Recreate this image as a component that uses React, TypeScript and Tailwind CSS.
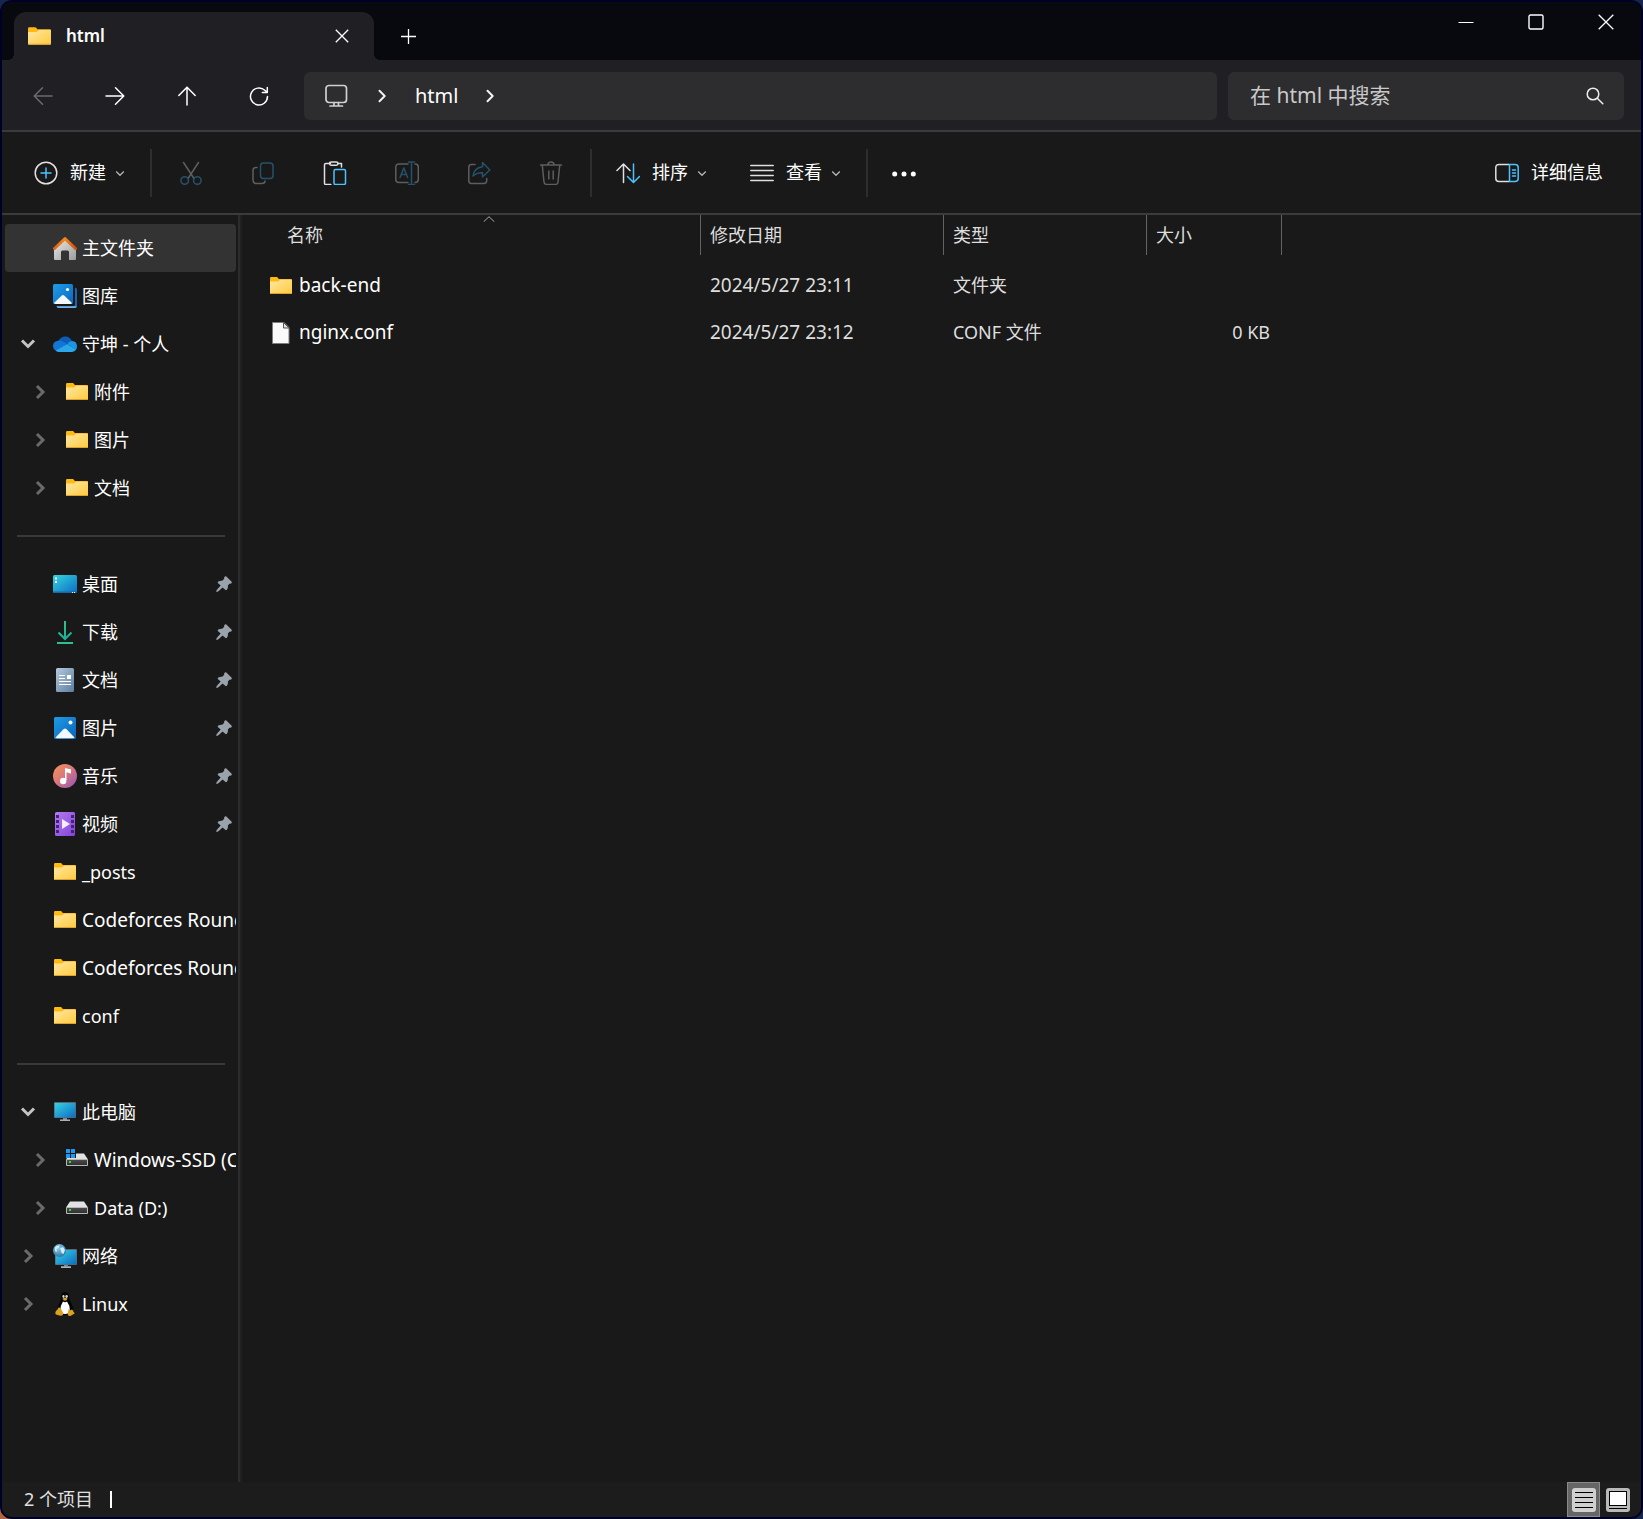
import React from "react";

type IconProps = { className?: string };

/* ---------- shell icons ---------- */

function FolderIcon({ className = "size-6" }: IconProps) {
  return (
    <svg viewBox="0 0 24 24" className={className} aria-hidden="true">
      <defs>
        <linearGradient id="folder-front" x1="0" y1="0" x2="1" y2="1">
          <stop offset="0" stopColor="#ffe8a3" />
          <stop offset="1" stopColor="#ffc93c" />
        </linearGradient>
      </defs>
      <path d="M1 4.2Q1 3 2.2 3h5.4q.8 0 1.3.7L9.8 5H22q1 0 1 1v13H1z" fill="#ffb913" />
      <path d="M1 7.6h7.4q.8 0 1.3-.5l.9-.9q.4-.4 1-.4H23V19q0 1-1 1H2q-1 0-1-1z" fill="url(#folder-front)" />
      <path d="M1 19h22q0 1-1 1H2q-1 0-1-1z" fill="#dfa02c" />
    </svg>
  );
}

function HomeIcon() {
  return (
    <svg viewBox="0 0 24 24" className="size-6" aria-hidden="true">
      <defs>
        <linearGradient id="home-wall" x1="0" y1="0" x2="1" y2="1">
          <stop offset="0" stopColor="#e8e8e8" />
          <stop offset="1" stopColor="#9b9b9b" />
        </linearGradient>
        <linearGradient id="home-roof" x1="0" y1="0" x2="1" y2="0">
          <stop offset="0" stopColor="#e0621a" />
          <stop offset=".5" stopColor="#f08a1c" />
          <stop offset="1" stopColor="#d4500f" />
        </linearGradient>
      </defs>
      <path d="M12 4 1 14v9q0 1 1 1h6v-8q0-1.500 1.500-1.500h5q1.500 0 1.500 1.500v8h6q1 0 1-1v-9z" fill="url(#home-wall)" />
      <path d="M1.500 12.500 12 2.600l10.500 9.900" fill="none" stroke="url(#home-roof)" strokeWidth="3" strokeLinejoin="round" strokeLinecap="round" />
    </svg>
  );
}

function GalleryIcon() {
  return (
    <svg viewBox="0 0 24 24" className="size-6" aria-hidden="true">
      <defs>
        <linearGradient id="gallery-sky" x1="0" y1="0" x2="1" y2="1">
          <stop offset="0" stopColor="#1f9de8" />
          <stop offset="1" stopColor="#0a67bd" />
        </linearGradient>
      </defs>
      <path d="M22 3.500q2 .3 2 2V22q0 2-2 2H5.500q-1.700 0-2-1.800H20q2 0 2-2z" fill="#1667b0" />
      <path d="M3.500 22.200H22q1 0 1.700-.5Q23.500 24 22 24H5.500q-1.700 0-2-1.800z" fill="#6fb2e8" />
      <rect width="20" height="20" rx="1.500" fill="url(#gallery-sky)" />
      <path d="m1 19 7.800-7.500q1.200-1 2.400 0L19 19q-.5 1-1.500 1h-15Q1.500 20 1 19z" fill="#f2f8fd" />
      <circle cx="14.500" cy="5.500" r="1.600" fill="#fff" />
    </svg>
  );
}

function OneDriveIcon() {
  return (
    <svg viewBox="0 0 24 24" className="size-6" aria-hidden="true">
      <path d="M5.500 9Q7.500 4.500 12.500 4.500q4.500 0 6.300 4.600L13 14z" fill="#0d5cb5" />
      <path d="M4.800 8.800q3.200-.8 6 1.200l5 3L2.500 18.500Q0 16.800 0 14q0-4.300 4.800-5.200z" fill="#1475d4" />
      <path d="M14.500 12.200q1.700-3.200 4.500-3.200 5 .6 5 5.300 0 2-1 3.500z" fill="#1b95e6" />
      <path d="M2.500 18.500 14.300 12.300l8.900 5.300q-1.500 2.400-4.200 2.400H6q-2 0-3.500-1.500z" fill="#29a8ec" />
    </svg>
  );
}

function DesktopIcon() {
  return (
    <svg viewBox="0 0 24 24" className="size-6" aria-hidden="true">
      <defs>
        <linearGradient id="desktop-face" x1="0" y1="0" x2="1" y2="1">
          <stop offset="0" stopColor="#35d5e0" />
          <stop offset="1" stopColor="#0c6cc4" />
        </linearGradient>
      </defs>
      <rect y="3" width="24" height="18" rx="1.500" fill="url(#desktop-face)" />
      <path d="M0 19.500h24q0 1.500-1.500 1.500h-21Q0 21 0 19.500z" fill="#1668a8" />
      <path d="M2 5.500h2v2H2zM2 9h2v2H2zM19 20h1v1h-1zM21 20h1v1h-1z" fill="#fff" />
    </svg>
  );
}

function DownloadIcon() {
  return (
    <svg viewBox="0 0 24 24" className="size-6" aria-hidden="true">
      <defs>
        <linearGradient id="download-ink" gradientUnits="userSpaceOnUse" x1="4" y1="1" x2="20" y2="24">
          <stop offset="0" stopColor="#35c97f" />
          <stop offset="1" stopColor="#12a5a0" />
        </linearGradient>
      </defs>
      <g fill="none" stroke="url(#download-ink)" strokeWidth="2">
        <path d="M12 1v17.500M5.500 12.500l6.500 6.500 6.500-6.500" />
      </g>
      <rect x="4" y="22" width="16" height="2" fill="#2cc08c" />
    </svg>
  );
}

function DocumentIcon() {
  return (
    <svg viewBox="0 0 24 24" className="size-6" aria-hidden="true">
      <defs>
        <linearGradient id="doc-face" x1="0" y1="0" x2="1" y2="1">
          <stop offset="0" stopColor="#b5c9dc" />
          <stop offset="1" stopColor="#5c7da0" />
        </linearGradient>
      </defs>
      <rect x="3" width="18" height="24" rx="1.500" fill="url(#doc-face)" />
      <path d="M6 7h6v1H6zM6 10h6v1H6zM6 13h12v1H6zM6 16h12v1H6zM14 7h4v4h-4z" fill="#fff" />
    </svg>
  );
}

function PictureIcon() {
  return (
    <svg viewBox="0 0 24 24" className="size-6" aria-hidden="true">
      <defs>
        <linearGradient id="picture-sky" x1="0" y1="0" x2="1" y2="1">
          <stop offset="0" stopColor="#1e9ce6" />
          <stop offset="1" stopColor="#0a62b8" />
        </linearGradient>
      </defs>
      <rect x="1" y="1" width="22" height="22" rx="1.500" fill="url(#picture-sky)" />
      <path d="m2.500 21.500 8-8.300q1.500-1.300 3 0l8 8.300q-.5.700-1.500.7H4q-1 0-1.500-.7z" fill="#f2f8fd" />
      <circle cx="17.500" cy="6.500" r="2" fill="#fff" />
    </svg>
  );
}

function MusicIcon() {
  return (
    <svg viewBox="0 0 24 24" className="size-6" aria-hidden="true">
      <defs>
        <linearGradient id="music-disc" x1=".1" y1=".1" x2=".9" y2=".9">
          <stop offset="0" stopColor="#f08f5b" />
          <stop offset=".5" stopColor="#d77580" />
          <stop offset="1" stopColor="#9b5bb0" />
        </linearGradient>
      </defs>
      <circle cx="12" cy="12" r="12" fill="url(#music-disc)" />
      <path d="M12 4q3 .8 6 1.300v4.200q-2-.3-4.500-1.200V16H12z" fill="#fff" />
      <circle cx="10.200" cy="17" r="3.200" fill="#fff" />
    </svg>
  );
}

function VideoIcon() {
  return (
    <svg viewBox="0 0 24 24" className="size-6" aria-hidden="true">
      <defs>
        <linearGradient id="video-face" x1="0" y1="0" x2="1" y2="1">
          <stop offset="0" stopColor="#b47bf0" />
          <stop offset="1" stopColor="#8344d6" />
        </linearGradient>
      </defs>
      <rect x="2" width="20" height="24" rx="1.500" fill="url(#video-face)" />
      <path d="M3 3h3v3H3zM3 8h3v3H3zM3 13h3v3H3zM3 18h3v3H3zM18 3h3v3h-3zM18 8h3v3h-3zM18 13h3v3h-3zM18 18h3v3h-3z" fill="#43217c" />
      <path d="M9 7v10l8-5z" fill="#f4eefb" />
    </svg>
  );
}

function ComputerIcon() {
  return (
    <svg viewBox="0 0 24 24" className="size-6" aria-hidden="true">
      <defs>
        <linearGradient id="pc-face" x1="0" y1="0" x2="1" y2="1">
          <stop offset="0" stopColor="#37d3e2" />
          <stop offset="1" stopColor="#0c6cc4" />
        </linearGradient>
      </defs>
      <rect x="1" y="2" width="22" height="16" rx="1" fill="#5c6670" />
      <rect x="1.700" y="3" width="20.600" height="14.400" fill="url(#pc-face)" />
      <path d="M10 18h4v2h-4z" fill="#7d868e" />
      <path d="M7 19.500h10V21H7z" fill="#a9b1b8" />
    </svg>
  );
}

function DriveIcon({ windows = false }: { windows?: boolean }) {
  return (
    <svg viewBox="0 0 24 24" className="size-6" aria-hidden="true">
      <defs>
        <linearGradient id="drive-front" x1="0" y1="0" x2="0" y2="1">
          <stop offset="0" stopColor="#4b4b4b" />
          <stop offset="1" stopColor="#303030" />
        </linearGradient>
      </defs>
      <path d="M5 5.500h14l4 6H1z" fill="#e2e2e2" />
      <rect x="1" y="11" width="22" height="7" rx="1" fill="#b6b6b6" />
      <rect x="2" y="12" width="20" height="5" fill="url(#drive-front)" />
      <rect x="4" y="13" width="2" height="2" fill="#2ee02e" />
      {windows && (
        <>
          <path d="M1 0h10v10H1z" fill="#14181c" />
          <path d="M1 1h4v4H1zM6 1h4v4H6zM1 6h4v4H1zM6 6h4v4H6z" fill="#1a9af0" />
        </>
      )}
    </svg>
  );
}

function NetworkIcon() {
  return (
    <svg viewBox="0 0 24 24" className="size-6" aria-hidden="true">
      <defs>
        <linearGradient id="net-face" x1="0" y1="0" x2="1" y2="1">
          <stop offset="0" stopColor="#37d3e2" />
          <stop offset="1" stopColor="#0c6cc4" />
        </linearGradient>
        <radialGradient id="net-globe" cx=".4" cy=".3" r=".8">
          <stop offset="0" stopColor="#8fd0ee" />
          <stop offset="1" stopColor="#1f6c9c" />
        </radialGradient>
      </defs>
      <rect x="2" y="5" width="22" height="16" rx="1" fill="#5c6670" />
      <rect x="2.700" y="6" width="20.600" height="14.400" fill="url(#net-face)" />
      <path d="M11 21h4v1.500h-4z" fill="#7d868e" />
      <path d="M8 22.300h10V24H8z" fill="#a9b1b8" />
      <circle cx="6.500" cy="6.500" r="6.500" fill="url(#net-globe)" />
      <path d="M2 3.500Q4 1 6.500 1.500L5.500 4 3.500 5 4 8 2 7zM7 4.500l3-1.500 2 3-1.500 4-2-1-.5-2.500z" fill="#d3ecf7" />
    </svg>
  );
}

function LinuxIcon() {
  return (
    <svg viewBox="0 0 24 24" className="size-6" aria-hidden="true">
      <path d="M12 0q4 0 4 5 0 3 2.300 6 2.700 4.500 1.700 9l-6 3h-5l-5-4q0-4.500 2.500-8Q8 8 8 5q0-5 4-5z" fill="#050505" />
      <path d="M10 9.500q2 1.500 4 0 2.800 4 2.800 8 0 4.500-4.800 4.500t-4.600-4.500q0-4 2.600-8z" fill="#fff" />
      <ellipse cx="10.500" cy="4.500" rx="1.100" ry="1.400" fill="#d8d8d8" />
      <ellipse cx="13.600" cy="4.500" rx="1.200" ry="1.400" fill="#d8d8d8" />
      <path d="M9.500 6.800q2.500-2 5 0-1 2-2.500 2t-2.500-2z" fill="#dba21c" />
      <path d="M5.500 15.500q1.500-.5 2.500 1.500l2.200 4q.3 3-2.700 2.800L3 22.500q-1-.5-.5-2.200.2-1.800 1.500-2zM15.500 17q1 2 3.500.5 1.500 1 1.500 2.500 1.500.8.800 1.700-2 1-3.500 2-2.800.8-3.100-1.700z" fill="#dba21c" />
    </svg>
  );
}

function FileIcon() {
  return (
    <svg viewBox="0 0 24 24" className="size-6" aria-hidden="true">
      <path d="M3.500 1.500H15l5 5v16H3.500z" fill="#fafafa" stroke="#7c7c7c" />
      <path d="M14.500 1.500V7H20z" fill="#e2e2e2" stroke="#555" />
    </svg>
  );
}

function PinIcon() {
  return (
    <svg viewBox="0 0 16 16" className="size-4 shrink-0" aria-hidden="true">
      <path
        d="M8.800.6q.8-.8 1.600 0l5 4.800q.9 1 0 1.800-.9.500-2 .6l-1.500 1.700q.3 2.500-1 4.300-.9.900-1.700 0l-2.600-2.400-4.500 4.200-1.800.3.200-1.700L4.700 9.600 2.100 7.300q-.8-.9.100-1.700 1.900-1.200 4-.9L8 3q0-1.500.8-2.400z"
        fill="#9aa3aa"
      />
    </svg>
  );
}

function Chevron({ dir }: { dir: "down" | "right" }) {
  return dir === "down" ? (
    <svg viewBox="0 0 16 16" className="size-4" fill="none" stroke="#c4c4c4" strokeWidth="3" aria-hidden="true">
      <path d="m2 4.500 6 6 6-6" />
    </svg>
  ) : (
    <svg viewBox="0 0 16 16" className="size-4" fill="none" stroke="#6a6a6a" strokeWidth="3" aria-hidden="true">
      <path d="m5 2 6 6-6 6" />
    </svg>
  );
}

function SmallChevron({ className = "" }: IconProps) {
  return (
    <svg viewBox="0 0 10 10" className={"size-[10px] " + className} fill="none" stroke="#b4b4b4" strokeWidth="1.300" aria-hidden="true">
      <path d="m1.200 3.500 3.800 3.800 3.800-3.800" />
    </svg>
  );
}

/* ---------- line icons ---------- */

function Line({ children, className = "size-6" }: { children: React.ReactNode; className?: string }) {
  return (
    <svg
      viewBox="0 0 24 24"
      className={className}
      fill="none"
      stroke="currentColor"
      strokeWidth="1.500"
      strokeLinecap="round"
      strokeLinejoin="round"
      aria-hidden="true"
    >
      {children}
    </svg>
  );
}

/* ---------- sidebar ---------- */

type NavItem = {
  label: string;
  icon: React.ReactNode;
  level?: 0 | 1;
  open?: boolean;
  closed?: boolean;
  pinned?: boolean;
  selected?: boolean;
  long?: boolean;
};

const groups: NavItem[][] = [
  [
    { label: "主文件夹", icon: <HomeIcon />, selected: true },
    { label: "图库", icon: <GalleryIcon /> },
    { label: "守坤 - 个人", icon: <OneDriveIcon />, open: true },
    { label: "附件", icon: <FolderIcon />, level: 1, closed: true },
    { label: "图片", icon: <FolderIcon />, level: 1, closed: true },
    { label: "文档", icon: <FolderIcon />, level: 1, closed: true },
  ],
  [
    { label: "桌面", icon: <DesktopIcon />, pinned: true },
    { label: "下载", icon: <DownloadIcon />, pinned: true },
    { label: "文档", icon: <DocumentIcon />, pinned: true },
    { label: "图片", icon: <PictureIcon />, pinned: true },
    { label: "音乐", icon: <MusicIcon />, pinned: true },
    { label: "视频", icon: <VideoIcon />, pinned: true },
    { label: "_posts", icon: <FolderIcon /> },
    { label: "Codeforces Round", icon: <FolderIcon />, long: true },
    { label: "Codeforces Round", icon: <FolderIcon />, long: true },
    { label: "conf", icon: <FolderIcon /> },
  ],
  [
    { label: "此电脑", icon: <ComputerIcon />, open: true },
    { label: "Windows-SSD (C:)", icon: <DriveIcon windows />, level: 1, closed: true, long: true },
    { label: "Data (D:)", icon: <DriveIcon />, level: 1, closed: true },
    { label: "网络", icon: <NetworkIcon />, closed: true },
    { label: "Linux", icon: <LinuxIcon />, closed: true },
  ],
];

function SidebarRow({ item }: { item: NavItem }) {
  return (
    <li>
      <button
        type="button"
        className={
          "flex h-12 w-full items-center overflow-hidden rounded-sm pr-1 text-left text-white " +
          (item.level === 1 ? "pl-[23px] " : "pl-[11px] ") +
          (item.selected ? "bg-[#333333]" : "")
        }
      >
        <span className="mr-[13px] flex w-6 shrink-0 justify-center">
          {item.open && <Chevron dir="down" />}
          {item.closed && <Chevron dir="right" />}
        </span>
        <span className="mr-[5px] shrink-0">{item.icon}</span>
        <span className={"flex-1 whitespace-nowrap " + (item.long ? "text-[19px]" : "text-[18px]")}>{item.label}</span>
        {item.pinned && <PinIcon />}
      </button>
    </li>
  );
}

function Sidebar() {
  return (
    <nav aria-label="导航窗格" className="w-[236px] shrink-0 overflow-hidden pt-[9px] pr-[2px] pl-[3px]">
      {groups.map((group, i) => (
        <React.Fragment key={i}>
          {i > 0 && (
            <div className="flex h-12 items-center pr-[11px] pl-3">
              <hr className="h-[2px] w-full border-0 bg-[#393939]" />
            </div>
          )}
          <ul>
            {group.map((item, j) => (
              <SidebarRow key={j} item={item} />
            ))}
          </ul>
        </React.Fragment>
      ))}
    </nav>
  );
}

/* ---------- bars ---------- */

function TitleBar() {
  return (
    <header className="flex h-[58px] shrink-0 bg-[#08080f]">
      <div className="relative mt-[10px] ml-3 flex w-[360px] items-center rounded-t-[12px] bg-[#202024] pr-5 pl-[13px]">
        <span className="absolute bottom-0 -left-[6px] size-[6px] bg-[radial-gradient(circle_at_0_0,transparent_6px,#202024_6px)]" />
        <span className="absolute -right-[6px] bottom-0 size-[6px] bg-[radial-gradient(circle_at_100%_0,transparent_6px,#202024_6px)]" />
        <FolderIcon className="size-[25px]" />
        <span className="ml-[14px] flex-1 text-[17px] font-semibold text-white">html</span>
        <button type="button" aria-label="关闭标签页" className="flex size-6 items-center justify-center text-white">
          <svg viewBox="0 0 14 14" className="size-[14px]" stroke="currentColor" strokeWidth="1.300" aria-hidden="true">
            <path d="m.8.8 12.400 12.400M13.200.8.8 13.200" />
          </svg>
        </button>
      </div>
      <button type="button" aria-label="新建标签页" className="mt-[10px] ml-[22px] flex h-12 w-6 items-center justify-center text-white">
        <svg viewBox="0 0 15 15" className="size-[15px]" stroke="currentColor" strokeWidth="1.300" aria-hidden="true">
          <path d="M7.500 0v15M0 7.500h15" />
        </svg>
      </button>
      <div className="ml-auto flex h-10">
        <button type="button" aria-label="最小化" className="flex w-[70px] items-center justify-center text-white">
          <svg viewBox="0 0 16 16" className="size-4" stroke="currentColor" aria-hidden="true">
            <path d="M.5 8.500h15" />
          </svg>
        </button>
        <button type="button" aria-label="最大化" className="flex w-[70px] items-center justify-center text-white">
          <svg viewBox="0 0 16 16" className="size-4" fill="none" stroke="currentColor" strokeWidth="1.400" aria-hidden="true">
            <rect x="1" y="1" width="14" height="14" rx="1.500" />
          </svg>
        </button>
        <button type="button" aria-label="关闭" className="flex w-[70px] items-center justify-center text-white">
          <svg viewBox="0 0 16 16" className="size-4" stroke="currentColor" strokeWidth="1.300" aria-hidden="true">
            <path d="m.7.7 14.600 14.600M15.300.7.7 15.300" />
          </svg>
        </button>
      </div>
    </header>
  );
}

function NavButton({ label, dim, children }: { label: string; dim?: boolean; children: React.ReactNode }) {
  return (
    <button
      type="button"
      aria-label={label}
      className={"flex h-12 w-[72px] items-center justify-center " + (dim ? "text-[#6b6b6e]" : "text-white")}
    >
      <svg
        viewBox="0 0 20 20"
        className="size-5"
        fill="none"
        stroke="currentColor"
        strokeWidth="1.500"
        strokeLinecap="round"
        strokeLinejoin="round"
        aria-hidden="true"
      >
        {children}
      </svg>
    </button>
  );
}

function CrumbChevron() {
  return (
    <svg viewBox="0 0 14 14" className="size-[14px]" fill="none" stroke="#f2f2f2" strokeWidth="2" strokeLinecap="round" strokeLinejoin="round" aria-hidden="true">
      <path d="m4.500 1.800 5.200 5.200-5.200 5.200" />
    </svg>
  );
}

function NavigationBar() {
  return (
    <div className="flex h-[72px] shrink-0 items-center border-b-2 border-[#3b3b3b] bg-[#202024] pt-[2px] pr-[17px] pl-[5px]">
      <NavButton label="后退" dim>
        <path d="M19 10H1.200M9.500 1.800 1.200 10l8.300 8.200" />
      </NavButton>
      <NavButton label="前进">
        <path d="M1 10h17.800M10.500 1.800l8.300 8.200-8.300 8.200" />
      </NavButton>
      <NavButton label="向上">
        <path d="M10 19V1.200M1.800 9.500 10 1.200l8.200 8.300" />
      </NavButton>
      <NavButton label="刷新">
        <path d="M18.500 10.500A8.500 8.500 0 1 1 15.800 4.300L18 6.300M18.300 1.500v5h-5" />
      </NavButton>
      <div className="ml-[9px] flex h-12 min-w-0 flex-1 items-center rounded-md bg-[#2d2d30] pl-5">
        <svg viewBox="0 0 24 24" className="size-6 text-[#d0d0d0]" fill="none" stroke="currentColor" strokeWidth="1.700" aria-hidden="true">
          <rect x="2" y="1.500" width="20.500" height="17" rx="3" />
          <path d="M10 18.500v3M14.500 18.500v3M6 22h12.500" strokeLinecap="round" />
        </svg>
        <span className="ml-[27px]">
          <CrumbChevron />
        </span>
        <button type="button" className="ml-[26px] text-[20px] text-white">
          html
        </button>
        <span className="ml-[25px]">
          <CrumbChevron />
        </span>
      </div>
      <label className="ml-[11px] flex h-12 w-[396px] items-center rounded-md bg-[#2d2d2f] pr-5 pl-[22px]">
        <input
          type="search"
          aria-label="搜索"
          placeholder="在 html 中搜索"
          className="min-w-0 flex-1 bg-transparent text-[21px] text-white outline-none placeholder:text-[#c9c9c9] placeholder:opacity-100"
        />
        <svg viewBox="0 0 18 18" className="size-[18px]" fill="none" stroke="#ececec" strokeWidth="1.500" strokeLinecap="round" aria-hidden="true">
          <circle cx="7" cy="7" r="5.800" />
          <path d="m11.300 11.300 5.500 5.500" />
        </svg>
      </label>
    </div>
  );
}

function Divider({ className }: IconProps) {
  return <span className={"h-12 w-[2px] shrink-0 bg-[#2e2e2e] " + className} />;
}

function ToolButton({ label, disabled, children }: { label: string; disabled?: boolean; children: React.ReactNode }) {
  return (
    <button type="button" aria-label={label} disabled={disabled} className="flex h-12 w-[72px] items-center justify-center">
      {children}
    </button>
  );
}

function Toolbar() {
  const textButton = "flex h-12 items-center text-[18px] text-white";
  return (
    <div role="toolbar" className="flex h-[83px] shrink-0 items-center border-b-2 border-[#3b3b3b] bg-[#191919] pr-[38px] pl-8">
      <button type="button" className={textButton}>
        <Line>
          <circle cx="12" cy="12" r="10.800" stroke="#e0e0e0" />
          <path d="M12 7v10M7 12h10" stroke="#4cc2ff" />
        </Line>
        <span className="ml-3">新建</span>
        <SmallChevron className="ml-[9px]" />
      </button>
      <Divider className="ml-[25px]" />
      <div className="ml-[3px] flex">
        <ToolButton label="剪切" disabled>
          <Line>
            <path d="m4.500 1.500 10.500 16M19.500 1.500 9 17.500" stroke="#5e5e5e" />
            <circle cx="5.700" cy="19.500" r="3.800" stroke="#24526b" />
            <circle cx="18.300" cy="19.500" r="3.800" stroke="#24526b" />
          </Line>
        </ToolButton>
        <ToolButton label="复制" disabled>
          <Line>
            <rect x="9.500" y="2" width="12.500" height="15.500" rx="3" stroke="#24526b" />
            <path d="M6 6.500H5q-3 0-3 3V19q0 3.500 3.500 3.500H11q3 0 3-2.500" stroke="#5e5e5e" />
          </Line>
        </ToolButton>
        <ToolButton label="粘贴">
          <Line>
            <path d="M7.500 2.500H2.800q-1.300 0-1.300 1.300v18.400q0 1.300 1.300 1.300h5M15 2.500h3.500V6" stroke="#e0e0e0" />
            <rect x="6.500" y=".9" width="8.500" height="3.400" rx="1.700" stroke="#e0e0e0" />
            <rect x="11" y="8.500" width="11.500" height="15" rx="1.500" stroke="#4cc2ff" />
          </Line>
        </ToolButton>
        <ToolButton label="重命名" disabled>
          <Line>
            <path d="M13 3H4Q.800 3 .800 6v12.500q0 3 3.200 3h9M20 3q3.300 0 3.300 3v12.500q0 3-3.300 3" stroke="#5e5e5e" />
            <path d="m5 16.500 3.800-9.500 3.800 9.500M6.200 13.500h5.200M16.500 1v22.500M13.500 1h6M13.500 23.500h6" stroke="#24526b" />
          </Line>
        </ToolButton>
        <ToolButton label="共享" disabled>
          <Line>
            <path d="M8 3.500H4.500q-2.700 0-2.700 2.700v13.500q0 2.700 2.700 2.700H17q2.700 0 2.700-2.700v-2.200" stroke="#5e5e5e" />
            <path d="m15.500 1.500 7.300 7.500-7.300 7v-4.300q-6-.2-9.500 3.300Q7 7 15.500 5.800z" stroke="#24526b" />
          </Line>
        </ToolButton>
        <ToolButton label="删除" disabled>
          <Line>
            <path d="M1.500 4h21M8.800 4q.2-3 3.200-3t3.200 3M3.300 4.500 5 21q.3 2.500 2.500 2.500h9q2.200 0 2.500-2.500l1.700-16.500M9.800 10v8M14.200 10v8" stroke="#5e5e5e" />
          </Line>
        </ToolButton>
      </div>
      <Divider className="ml-[3px]" />
      <button type="button" className={textButton + " ml-6"}>
        <Line>
          <path d="M7.500 21.500V3.500M1 9.500l6.500-6.500 6.500 6.500" stroke="#e0e0e0" />
          <path d="M17.500 3v18M11.500 15.500l6 6 6-6" stroke="#4cc2ff" />
        </Line>
        <span className="ml-3">排序</span>
        <SmallChevron className="ml-[9px]" />
      </button>
      <button type="button" className={textButton + " ml-[43px]"}>
        <Line>
          <path d="M.800 4.500h22.400M.800 9.500h22.400M.800 14.500h22.400M.800 19.500h22.400" stroke="#e0e0e0" />
        </Line>
        <span className="ml-3">查看</span>
        <SmallChevron className="ml-[9px]" />
      </button>
      <Divider className="ml-[25px]" />
      <button type="button" aria-label="查看更多" className="ml-6 flex h-12 items-center">
        <svg viewBox="0 0 24 24" className="size-6" fill="#fff" aria-hidden="true">
          <circle cx="2.700" cy="13" r="2.500" />
          <circle cx="12" cy="13" r="2.500" />
          <circle cx="21.300" cy="13" r="2.500" />
        </svg>
      </button>
      <button type="button" className={textButton + " ml-auto"}>
        <Line>
          <path d="M14 3.500H4Q.800 3.500.800 6.500v11q0 3 3.200 3h10" stroke="#e0e0e0" />
          <path d="M14.500 3.500H20q3.200 0 3.200 3v11q0 3-3.200 3h-5.500zM17.500 9h3M17.500 12h3M17.500 15h3" stroke="#4cc2ff" />
        </Line>
        <span className="ml-3">详细信息</span>
      </button>
    </div>
  );
}

/* ---------- file list ---------- */

const files = [
  { name: "back-end", icon: <FolderIcon />, date: "2024/5/27 23:11", type: "文件夹", size: "" },
  { name: "nginx.conf", icon: <FileIcon />, date: "2024/5/27 23:12", type: "CONF 文件", size: "0 KB" },
];

const headCell = "flex h-10 items-center border-r border-[#636363] pl-[9px]";

function FileList() {
  return (
    <main className="min-w-0 flex-1 overflow-hidden">
      <table className="w-full table-fixed border-collapse text-[19px] text-[#dedede]">
        <colgroup>
          <col className="w-[459px]" />
          <col className="w-[243px]" />
          <col className="w-[203px]" />
          <col className="w-[135px]" />
          <col />
        </colgroup>
        <thead>
          <tr className="text-left align-top text-[18px]">
            <th className="h-[47px] p-0 font-normal">
              <div className={headCell + " relative ml-9"}>
                名称
                <svg viewBox="0 0 12 6" className="absolute top-px left-1/2 h-[6px] w-3 -translate-x-1/2" fill="none" stroke="#a8a8a8" aria-hidden="true">
                  <path d="M.7 5.700 6 .7l5.300 5" />
                </svg>
              </div>
            </th>
            <th className="p-0 font-normal">
              <div className={headCell}>修改日期</div>
            </th>
            <th className="p-0 font-normal">
              <div className={headCell}>类型</div>
            </th>
            <th className="p-0 font-normal">
              <div className={headCell}>大小</div>
            </th>
            <td />
          </tr>
        </thead>
        <tbody>
          {files.map((file) => (
            <tr key={file.name} className="h-[47px]">
              <td className="p-0">
                <div className="flex items-center gap-[6px] pl-[27px] text-white">
                  {file.icon}
                  <span>{file.name}</span>
                </div>
              </td>
              <td className="p-0 pl-[9px]">{file.date}</td>
              <td className="p-0 pl-[9px] text-[18px]">{file.type}</td>
              <td className="p-0 pr-3 text-right text-[18px]">{file.size}</td>
              <td />
            </tr>
          ))}
        </tbody>
      </table>
    </main>
  );
}

function StatusBar() {
  return (
    <footer className="flex h-[35px] shrink-0 items-center bg-[#1c1c1c] pr-[6px] pl-[22px] text-[18px] text-[#e0e0e0]">
      <span>2 个项目</span>
      <span className="ml-[17px] h-[17px] w-[2px] bg-white" />
      <div className="ml-auto flex h-full">
        <button type="button" aria-label="详细信息视图" className="flex w-[33px] items-center justify-center border border-[#8a8a8a] bg-[#666666]">
          <svg viewBox="0 0 24 24" className="size-6" aria-hidden="true">
            <rect width="24" height="24" rx="3" fill="#cfcfcf" />
            <path d="M3 4.500h18M3 9.500h18M3 14.500h18M3 19.500h18" stroke="#000" />
          </svg>
        </button>
        <button type="button" aria-label="大图标视图" className="flex w-[35px] items-center justify-center">
          <svg viewBox="0 0 24 24" className="size-6" aria-hidden="true">
            <rect width="24" height="24" rx="3" fill="#b9b9b9" />
            <rect x="3.500" y="3.500" width="17" height="14" fill="#fff" stroke="#000" />
            <path d="M3 20.500h18" stroke="#000" />
          </svg>
        </button>
      </div>
    </footer>
  );
}

export default function App() {
  return (
    <div className="flex h-screen bg-[linear-gradient(to_top_right,#b0653f_0px,#b0653f_20px,#16264a_24px)] font-['Noto_Sans','Noto_Sans_CJK_SC',sans-serif]">
      <div className="flex min-w-0 flex-1 flex-col overflow-hidden rounded-[12px] border-2 border-[#000026] bg-[#191919]">
        <TitleBar />
        <NavigationBar />
        <Toolbar />
        <div className="flex min-h-0 flex-1">
          <Sidebar />
          <div className="w-1 shrink-0 border-l-2 border-[#2c2c2c] bg-[#202020]" />
          <FileList />
        </div>
        <StatusBar />
      </div>
    </div>
  );
}
